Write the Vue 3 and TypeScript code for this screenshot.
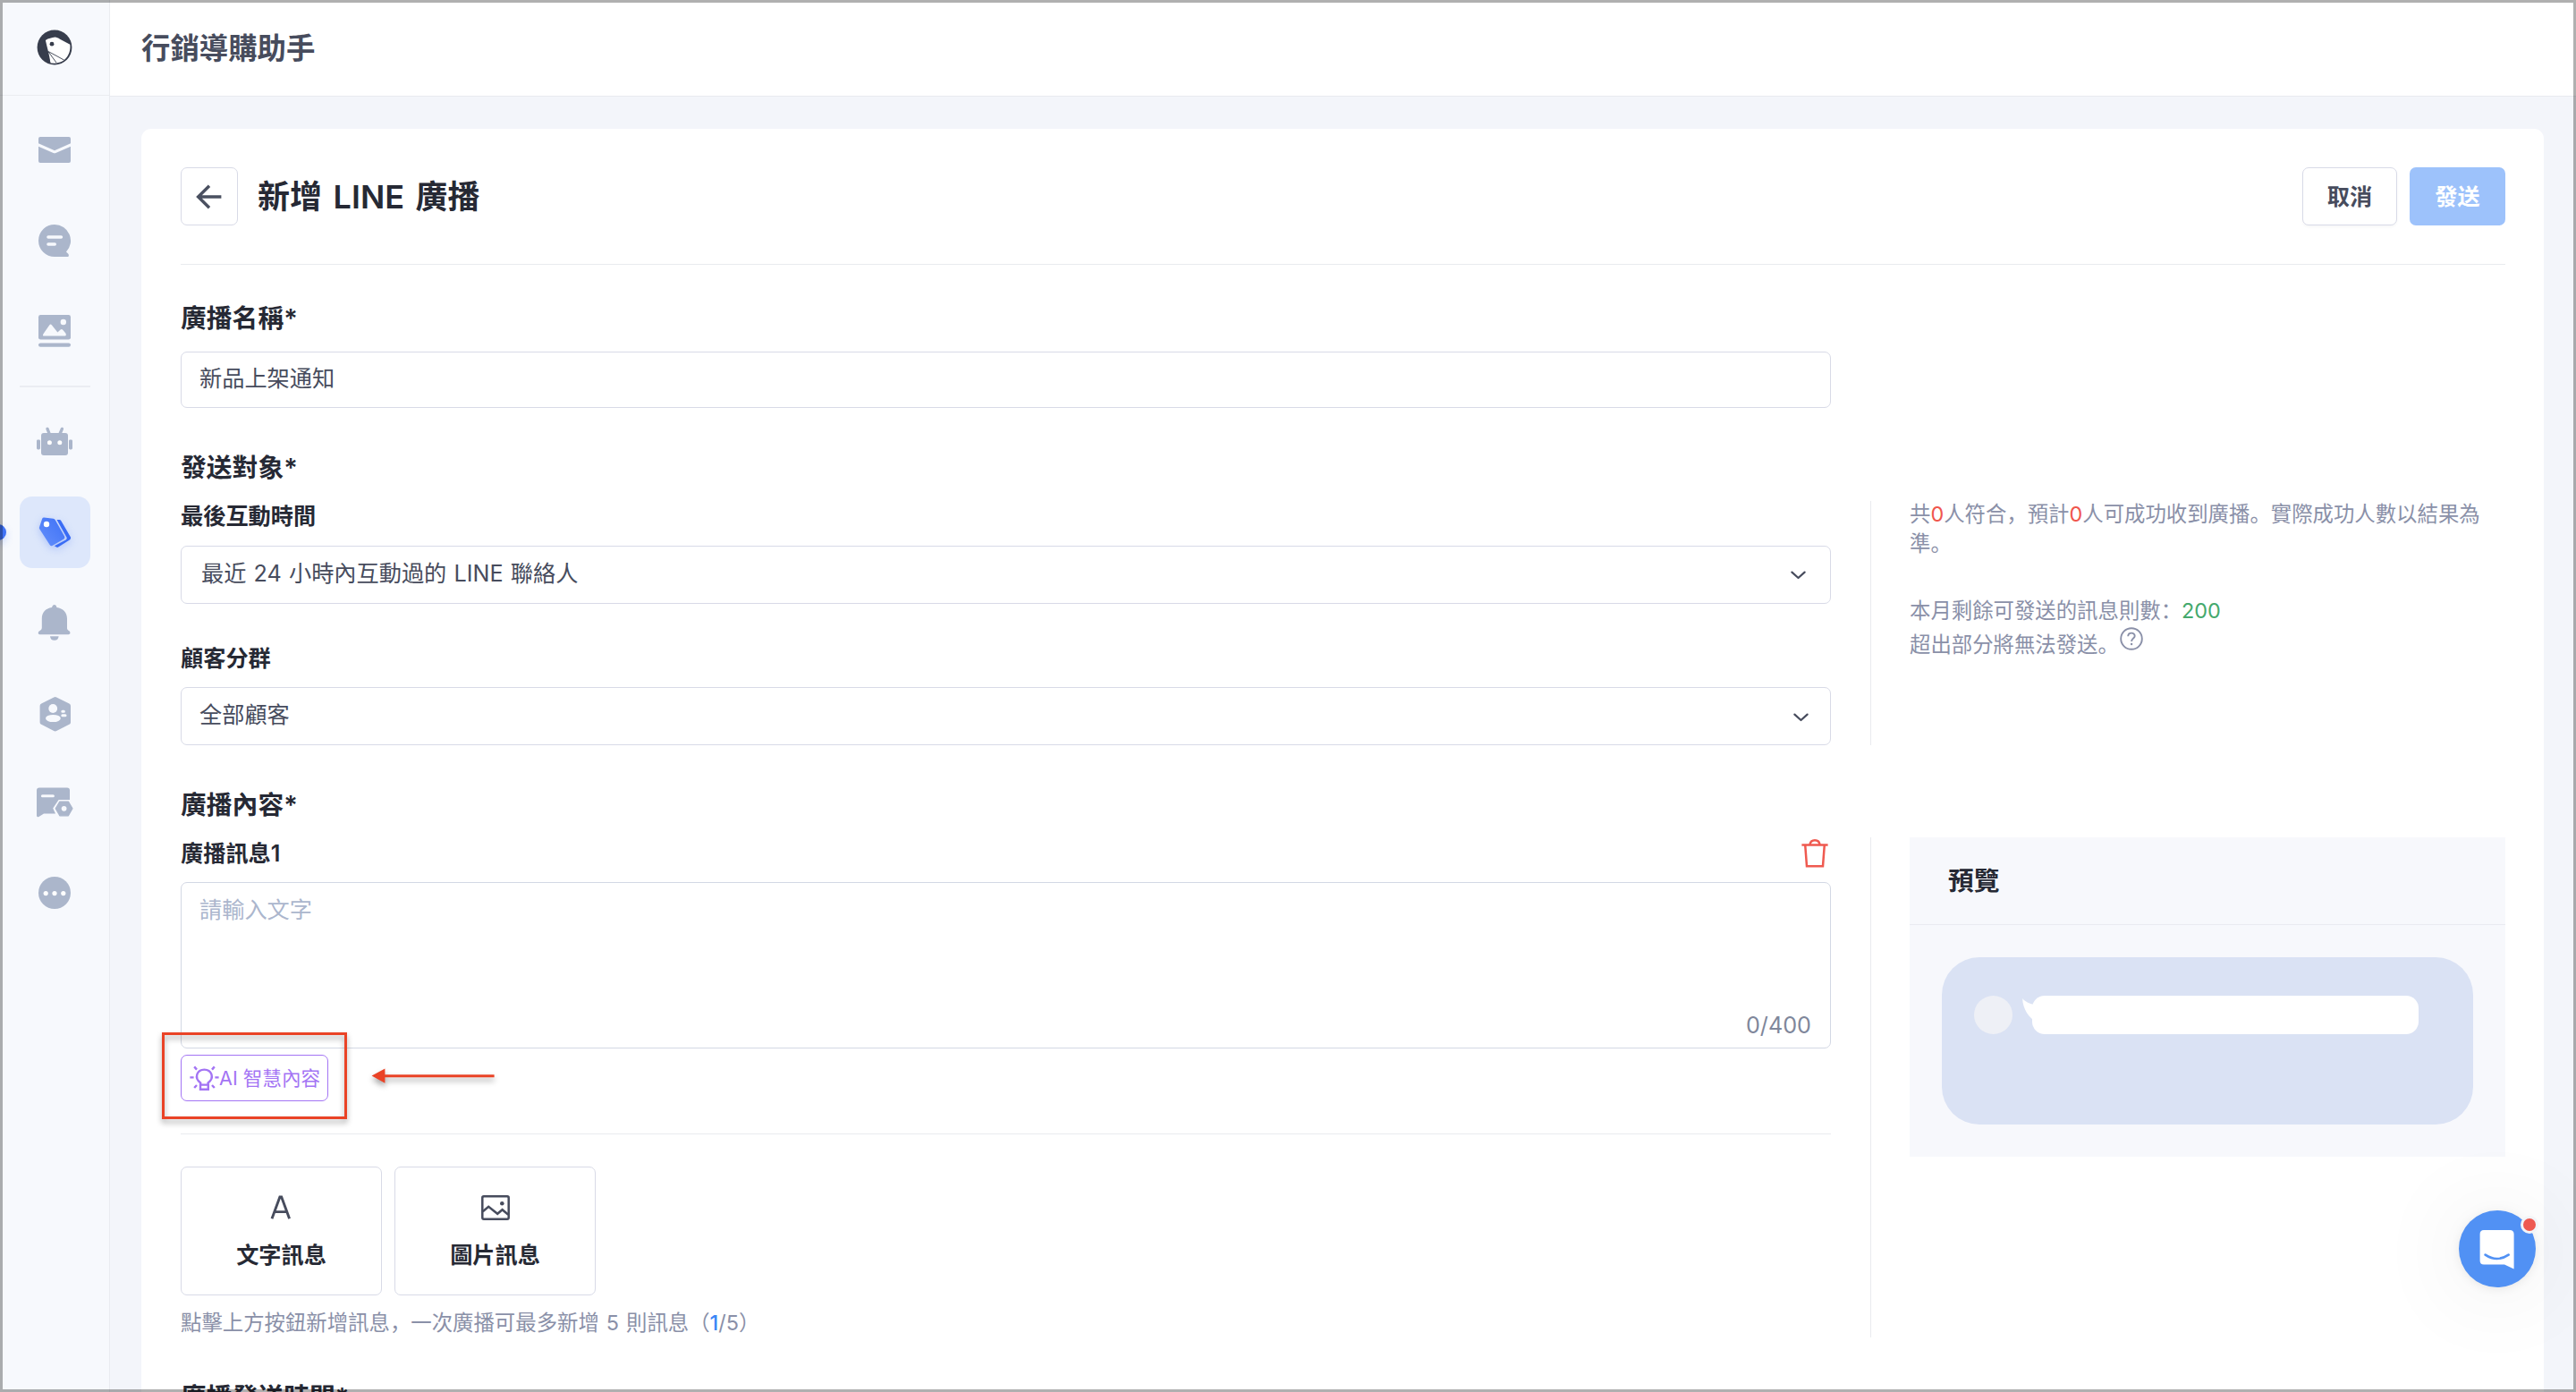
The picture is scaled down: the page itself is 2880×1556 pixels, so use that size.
<script setup lang="ts">
import { ref } from 'vue'

interface NavItem {
  id: string
  active?: boolean
}

const upperNav: NavItem[] = [{ id: 'mail' }, { id: 'chat' }, { id: 'gallery' }]
const lowerNav: NavItem[] = [
  { id: 'robot' },
  { id: 'tag', active: true },
  { id: 'bell' },
  { id: 'member' },
  { id: 'message' },
  { id: 'more' },
]

const broadcastName = ref('新品上架通知')
const lastActive = ref('最近 24 小時內互動過的 LINE 聯絡人')
const segment = ref('全部顧客')
const matched = ref(0)
const reachable = ref(0)
const quota = ref(200)
const messageCount = ref(1)
</script>

<template>
  <div class="page">
    <aside class="sidebar">
      <div class="brand">
        <svg width="40" height="40" viewBox="0 0 40 40">
          <circle cx="20" cy="20" r="19.4" fill="#373d4c" />
          <path d="M9.9 11.9C13 9.6 17 9.6 20.5 8.6C22.5 8.6 24 9.6 26 10.7L37.3 16.8C38.6 26.5 32.6 37.6 20 37.7L15.4 37.4C14.4 28 11.5 20 9.9 11.9Z" fill="#fff" />
          <circle cx="17" cy="16.2" r="2.4" fill="#373d4c" />
          <path d="M13.2 25L22 37M13 24.5L30.5 34" stroke="#373d4c" stroke-width="0.9" fill="none" />
          <path d="M11.5 24L15.6 37.8L13 37.5Z" fill="#373d4c" />
        </svg>
      </div>
      <nav class="nav">
        <div v-for="item in upperNav" :key="item.id" class="nav-item">
          <svg v-if="item.id === 'mail'" viewBox="0 0 80 80">
            <path d="M23 26H55A2 2 0 0 1 57 28V33.2L39 41.2L21 33.2V28A2 2 0 0 1 23 26Z" />
            <path d="M21 36.8L37.6 44Q39 44.5 40.4 44L57 36.8V53A2 2 0 0 1 55 55H23A2 2 0 0 1 21 53Z" />
          </svg>
          <svg v-else-if="item.id === 'chat'" viewBox="0 0 80 80">
            <path d="M39 23A18 18 0 0 1 52 53.5L54.5 56Q55.6 59 53.5 59H39A18 18 0 0 1 39 23Z" />
            <path d="M32 37H46.4M32 45H39.2" class="cut" />
          </svg>
          <svg v-else viewBox="0 0 80 80">
            <rect x="21" y="23" width="36" height="27.6" rx="2.4" />
            <path d="M33.2 34.4Q34.6 32.4 36 34.4L42.4 42.4L45.6 39.6Q47 38.4 48.2 39.8L51.4 43.6Q52.6 46.6 50.6 46.6H27.4Q25 46.6 26.6 44Z" fill="#f7f9fd" />
            <circle cx="48.8" cy="31" r="3.2" fill="#f7f9fd" />
            <rect x="21" y="54.4" width="36" height="4.4" rx="2.2" />
          </svg>
        </div>
        <div class="nav-divider"></div>
        <div v-for="item in lowerNav" :key="item.id" class="nav-item" :class="{ active: item.active }">
          <svg v-if="item.id === 'robot'" viewBox="0 0 80 80">
            <rect x="24" y="30" width="30" height="25" rx="3" />
            <rect x="19" y="37.4" width="4" height="11" rx="1.4" />
            <rect x="55" y="37.4" width="4" height="11" rx="1.4" />
            <path d="M31 25.4L33.2 31M47.4 25.4L45 31" stroke="#abb6cb" stroke-width="3.4" stroke-linecap="round" />
            <circle cx="33.4" cy="40.8" r="2.5" fill="#fff" />
            <circle cx="44.8" cy="40.8" r="2.5" fill="#fff" />
          </svg>
          <svg v-else-if="item.id === 'tag'" viewBox="0 0 80 80" class="tag-icon">
            <defs>
              <linearGradient id="tagFill" x1="0" y1="1" x2="1" y2="0">
                <stop offset="0" stop-color="#6590fb" />
                <stop offset="1" stop-color="#3d70f6" />
              </linearGradient>
            </defs>
            <path d="M41.5 26H44.6Q45.6 26.2 46.2 27L57 45.6Q57.4 47.2 56.2 48.2L43.2 56.6Q42 57.2 41 56.6L38.8 55.2L52 48.2Q53.2 47 52.4 45.4Z" fill="#3a6cf5" />
            <path d="M27.2 23.6L37.6 24.8Q39 25 39.8 26.2L50.2 44.8Q50.8 46.6 49.4 47.6L36.4 55Q34.8 55.6 33.8 54.2L22.2 36.2Q21.6 35.2 22 34.2L25.2 24.8Q25.8 23.5 27.2 23.6Z" fill="url(#tagFill)" />
            <circle cx="30" cy="31" r="3.2" fill="#fff" />
          </svg>
          <svg v-else-if="item.id === 'bell'" viewBox="0 0 80 80">
            <path d="M38.6 20Q41 20 41.4 23C48.4 24 53 28.6 53 35.6V46.6Q53 48 54.8 49L56 49.8Q57.4 53 54.6 53.2H22.6Q19.8 53 21.2 50L23 48.8Q24.8 47.8 24.8 46V35.6C24.8 28.6 29 24 36 23Q36.6 20 38.6 20Z" />
            <path d="M34 55.2H43.6Q43.2 59.8 38.8 59.8Q34.4 59.8 34 55.2Z" />
          </svg>
          <svg v-else-if="item.id === 'member'" viewBox="0 0 80 80">
            <path d="M38.2 22.4Q39.7 21.6 41.2 22.4L55.4 29.6Q57 30.4 57 32V50.4Q57 52 55.4 52.8L41.2 60Q39.7 60.8 38.2 60L24.2 52.8Q22.6 52 22.6 50.4V32Q22.6 30.4 24.2 29.6Z" />
            <ellipse cx="37.2" cy="35" rx="4.9" ry="5" fill="#f7f9fd" />
            <ellipse cx="37.4" cy="46" rx="8.4" ry="4.1" fill="#f7f9fd" />
            <path d="M47.8 38.2H49.4M47.8 42.8H51" class="cut thin" />
          </svg>
          <svg v-else-if="item.id === 'message'" viewBox="0 0 80 80">
            <path d="M22 22.4H53Q56 22.4 56 25.4V36H43.6L37.2 45.6L40 51.6H27L21.4 55Q19 56 19 53.6V25.4Q19 22.4 22 22.4Z" />
            <path d="M25.4 31.8H37.4" class="cut thin" />
            <path d="M44.8 38H54.4L59 45.8L54.4 53.8H44.8L40.2 45.8Z" stroke="#abb6cb" stroke-width="1.2" stroke-linejoin="round" />
            <circle cx="49.6" cy="45.8" r="2.9" fill="#f7f9fd" />
          </svg>
          <svg v-else viewBox="0 0 80 80">
            <circle cx="39" cy="39" r="18" />
            <circle cx="29.2" cy="39.6" r="2.6" fill="#fff" />
            <circle cx="39" cy="39.6" r="2.6" fill="#fff" />
            <circle cx="48.8" cy="39.6" r="2.6" fill="#fff" />
          </svg>
          <span v-if="item.active" class="active-dot"></span>
        </div>
      </nav>
    </aside>

    <div class="main">
      <header class="topbar">行銷導購助手</header>
      <div class="content">
        <div class="card">
          <div class="card-head">
            <button class="back" aria-label="返回">
              <svg width="30" height="28" viewBox="0 0 30 28">
                <path d="M28.4 14H2.6M15 1.8L2.6 14L15 26.2" fill="none" stroke="#4a5060" stroke-width="3.4" />
              </svg>
            </button>
            <h1>新增 LINE 廣播</h1>
            <div class="actions">
              <button class="btn">取消</button>
              <button class="btn primary">發送</button>
            </div>
          </div>

          <h2 class="first">廣播名稱*</h2>
          <div class="field name-field">{{ broadcastName }}</div>

          <h2>發送對象*</h2>
          <div class="row audience">
            <div class="left">
              <h3>最後互動時間</h3>
              <div class="field select one">
                <span>{{ lastActive }}</span>
                <svg width="17" height="10" viewBox="0 0 17 10"><path d="M1.4 1.6L8.5 8L15.6 1.6" fill="none" stroke="#474c5d" stroke-width="2.2" stroke-linecap="round" stroke-linejoin="round" /></svg>
              </div>
              <h3 class="second">顧客分群</h3>
              <div class="field select two">
                <span>{{ segment }}</span>
                <svg width="17" height="10" viewBox="0 0 17 10"><path d="M1.4 1.6L8.5 8L15.6 1.6" fill="none" stroke="#474c5d" stroke-width="2.2" stroke-linecap="round" stroke-linejoin="round" /></svg>
              </div>
            </div>
            <div class="right info">
              <p class="estimate">共<b class="red">{{ matched }}</b>人符合，預計<b class="red">{{ reachable }}</b>人可成功收到廣播。實際成功人數以結果為準。</p>
              <p class="quota">本月剩餘可發送的訊息則數：<b class="green">{{ quota }}</b></p>
              <p class="limit">
                <span>超出部分將無法發送。</span>
                <svg width="26" height="26" viewBox="0 0 26 26" fill="none" stroke="#8a90a8">
                  <circle cx="13" cy="13" r="11.8" stroke-width="1.9" />
                  <path d="M9.2 10.2C9.4 5.4 16.8 5.6 16.7 10C16.6 12.6 13.2 12.6 13.1 16" stroke-width="1.9" />
                  <circle cx="13.1" cy="19" r="1.2" fill="#8a90a8" stroke="none" />
                </svg>
              </p>
            </div>
          </div>

          <h2>廣播內容*</h2>
          <div class="row body-row">
            <div class="left">
              <div class="message-head">
                <h3>廣播訊息1</h3>
                <svg width="30" height="33" viewBox="0 0 30 33" fill="none" stroke="#ef5a50" stroke-width="2.5">
                  <path d="M0.4 7.4H29.6M4.2 7.4L6 31.2H24L25.8 7.4M9.4 7.4C10.4 0.4 19.6 0.4 20.6 7.4" />
                </svg>
              </div>
              <div class="editor">
                <span class="placeholder">請輸入文字</span>
                <span class="counter">0/400</span>
              </div>
              <button class="ai">
                <svg width="33" height="29" viewBox="0 0 33 29" fill="none" stroke="#a374f4" stroke-width="2.4">
                  <path d="M12.2 21.6V19.4C4.4 14 8.4 4.6 16.4 4.6S28.4 14 20.6 19.4V21.6" />
                  <path d="M12 21.6H20.8V26.8H12Z" />
                  <path d="M0.4 13.4H4.6M28.4 13.4H32.6M5.2 1.4L8 4.6M27.8 1.4L25 4.6M5.2 25L8 22M27.8 25L25 22" />
                </svg>
                <span>AI 智慧內容</span>
              </button>
              <div class="rule"></div>
              <div class="adders">
                <button class="adder">
                  <svg width="32" height="28" viewBox="0 0 32 28" fill="none" stroke="#474c5d" stroke-width="2.9">
                    <path d="M5 26.2L13.9 2H15.7L24.6 26.2M8.2 18.6H21.4" />
                  </svg>
                  <span>文字訊息</span>
                </button>
                <button class="adder">
                  <svg width="32" height="28" viewBox="0 0 32 28" fill="none" stroke="#474c5d" stroke-width="2.5">
                    <rect x="1.3" y="1.3" width="29.4" height="25.4" rx="1.6" />
                    <path d="M1.8 18.2L8.2 12.8L18.2 20.8L23.6 16.2L30.2 21.8" />
                    <ellipse cx="23.3" cy="9.2" rx="2.3" ry="2.2" fill="#474c5d" stroke="none" />
                  </svg>
                  <span>圖片訊息</span>
                </button>
              </div>
              <p class="hint">點擊上方按鈕新增訊息，一次廣播可最多新增 5 則訊息（<b class="blue">{{ messageCount }}</b>/5）</p>
            </div>
            <div class="right">
              <div class="preview">
                <div class="preview-title">預覽</div>
                <div class="preview-body">
                  <div class="screen">
                    <span class="avatar"></span>
                    <div class="bubble">
                      <svg class="tail" width="16" height="28" viewBox="0 0 16 28">
                        <path d="M0.2 0C3 4 8 5.4 13 7.2L16 16V27C8 22 0.2 12 0.2 0Z" fill="#fff" />
                      </svg>
                    </div>
                  </div>
                </div>
              </div>
            </div>
          </div>

          <h2 class="last">廣播發送時間*</h2>
        </div>
      </div>
    </div>

    <div class="callout-box"></div>
    <svg class="callout-arrow" width="140" height="24" viewBox="0 0 140 24">
      <path d="M0.6 8.6L15.4 0.6V7.2H137.6V10.2H15.4V16.8Z" fill="#ea4326" />
    </svg>

    <div class="launcher">
      <svg width="40" height="44" viewBox="0 0 40 44">
        <path d="M5 0H34Q38.6 0 38.6 4.6V43.4L28 38.6H5Q0.6 38.6 0.6 34V4.6Q0.6 0 5 0Z" fill="#fff" />
        <path d="M6.6 27.6Q19.6 36.4 32.6 27.6" fill="none" stroke="#5191f4" stroke-width="2.6" stroke-linecap="round" />
      </svg>
      <span class="badge"></span>
    </div>

    <div class="frame"></div>
  </div>
</template>

<style>
html,
body {
  margin: 0;
  background: #f2f4f9;
  overflow: hidden;
}
</style>

<style scoped>
.page {
  position: relative;
  display: flex;
  width: 2880px;
  height: 1556px;
  overflow: hidden;
  background: #f3f5fa;
  color: #262934;
  font-family: Inter, 'Noto Sans CJK SC', sans-serif;
  font-size: 25.2px;
}
.page * {
  box-sizing: border-box;
}
h1,
h2,
h3,
p {
  margin: 0;
}
b {
  font-weight: 400;
}
button {
  padding: 0;
  font: inherit;
  color: inherit;
  background: #fff;
  border: 1px solid #d8dae7;
  border-radius: 7px;
}

/* Sidebar */
.sidebar {
  flex: none;
  width: 123px;
  background: #f7f9fd;
  border-right: 1px solid #eaecf1;
}
.brand {
  display: flex;
  justify-content: center;
  align-items: center;
  height: 107px;
  border-bottom: 1px solid #eaecf1;
}
.nav {
  display: flex;
  flex-direction: column;
  align-items: center;
  gap: 21px;
  padding-top: 20px;
}
.nav-item {
  position: relative;
  flex: none;
  width: 79px;
  height: 80px;
  margin-left: 1px;
  border-radius: 14px;
}
.nav-item svg {
  display: block;
  width: 80px;
  height: 80px;
  fill: #abb6cb;
}
.nav-item .cut {
  fill: none;
  stroke: #f7f9fd;
  stroke-width: 3.6;
  stroke-linecap: round;
}
.nav-item .cut.thin {
  stroke-width: 3;
}
.nav-item.active {
  background: #dde7fb;
}
.nav-item .tag-icon {
  filter: drop-shadow(0 3px 4px rgba(70, 115, 246, 0.3));
}
.active-dot {
  position: absolute;
  left: -33px;
  top: 31px;
  width: 18px;
  height: 18px;
  border-radius: 50%;
  background: #3f72f6;
  box-shadow: 0 4px 8px rgba(63, 114, 246, 0.25);
}
.nav-divider {
  flex: none;
  width: 79px;
  height: 2px;
  margin: 1px 0 0 1px;
  background: #ebedf2;
}

/* Header and card */
.main {
  flex: 1;
  min-width: 0;
}
.topbar {
  height: 108px;
  padding-left: 35px;
  border-bottom: 1px solid #e8eaef;
  background: #fff;
  color: #474c5d;
  font-size: 32.4px;
  font-weight: 600;
  line-height: 109px;
}
.content {
  padding: 36px 36px 0 35px;
}
.card {
  height: 1500px;
  padding: 43px 43px 0 44px;
  border-radius: 11px;
  background: #fff;
}
.card-head {
  display: flex;
  height: 109px;
  border-bottom: 1px solid #e9ebef;
}
.back {
  display: flex;
  align-items: center;
  justify-content: center;
  width: 64px;
  height: 65px;
}
h1 {
  flex: 1;
  margin-left: 22px;
  font-size: 36px;
  font-weight: 600;
  line-height: 66px;
  word-spacing: 3.5px;
}
.actions {
  display: flex;
  gap: 14px;
}
.btn {
  width: 106px;
  height: 65px;
  padding-bottom: 3px;
  color: #474c5d;
  font-weight: 600;
  box-shadow: 0 2px 3px rgba(0, 0, 0, 0.03);
}
.btn.primary {
  width: 107px;
  border: none;
  background: #9dc2fb;
  color: #fff;
  box-shadow: none;
}

/* Form */
h2 {
  height: 40px;
  margin: 46px 0 18px;
  font-size: 28.8px;
  font-weight: 600;
  line-height: 41px;
}
h2.first {
  margin-top: 39px;
}
h3 {
  height: 34px;
  margin-bottom: 16px;
  font-size: 25.2px;
  font-weight: 600;
  line-height: 34px;
}
h3.second {
  margin: 44px 0 15px;
}
.field {
  width: 1845px;
  height: 65px;
  padding-left: 20px;
  border: 1px solid #d8dae7;
  border-radius: 7px;
  color: #474c5d;
  line-height: 61px;
}
.name-field {
  height: 63px;
  line-height: 59px;
}
.select {
  display: flex;
  justify-content: space-between;
  align-items: center;
}
.select span {
  margin-bottom: 3px;
  line-height: 40px;
  word-spacing: 1.1px;
}
.select.one {
  padding: 0 27px 0 22px;
}
.select.two {
  padding-right: 24px;
}
.select.two svg {
  margin-top: 3px;
}
.row {
  display: flex;
}
.left {
  width: 1889px;
  padding-right: 44px;
}
.right {
  flex: 1;
  padding-left: 43px;
  border-left: 1px solid #e9ebef;
}
.info {
  color: #8a90a8;
  font-size: 23.4px;
  line-height: 33px;
}
.info p {
  width: 650px;
}
.info .estimate {
  margin-top: -2px;
}
.red {
  color: #f0564d;
}
.green {
  color: #45a96d;
}
.blue {
  color: #3c86f6;
  font-weight: 500;
}
.info .quota {
  margin-top: 42px;
}
.info .limit {
  display: flex;
  gap: 1px;
  margin-top: 5px;
}
.limit svg {
  margin-top: -3px;
}
.body-row {
  margin-top: -1px;
}
.message-head {
  display: flex;
  justify-content: space-between;
  align-items: flex-start;
  height: 50px;
  padding: 1px 3px 0 0;
}
.message-head h3 {
  margin-bottom: 0;
}
.editor {
  display: flex;
  flex-direction: column;
  justify-content: space-between;
  height: 186px;
  padding: 12px 21px 7px 20px;
  border: 1px solid #d3d8e4;
  border-radius: 7px;
  line-height: 36px;
}
.placeholder {
  color: #abb6cd;
}
.counter {
  align-self: flex-end;
  color: #7f879b;
}
.ai {
  display: flex;
  align-items: center;
  width: 165px;
  height: 52px;
  margin-top: 7px;
  padding: 0 0 0 9px;
  border-color: #a374f4;
  color: #a374f4;
  font-size: 21.6px;
  white-space: nowrap;
}
.ai span {
  margin-bottom: 3px;
}
.rule {
  height: 1px;
  margin: 36px 0;
  background: #e9ebef;
}
.adders {
  display: flex;
  gap: 14px;
}
.adder {
  display: flex;
  flex-direction: column;
  align-items: center;
  width: 225px;
  height: 144px;
  padding-top: 31px;
  font-weight: 600;
}
.adder span {
  margin-top: 22px;
  line-height: 34px;
}
.hint {
  height: 32px;
  margin-top: 15px;
  color: #8a90a8;
  font-size: 23.4px;
  line-height: 32px;
  word-spacing: 1.4px;
}
h2.last {
  margin-top: 46px;
}

/* Preview */
.preview {
  height: 357px;
  background: #f7f8fc;
}
.preview-title {
  height: 98px;
  padding-left: 43px;
  border-bottom: 1px solid #e9ebf1;
  font-size: 28.8px;
  font-weight: 600;
  line-height: 97px;
}
.preview-body {
  padding: 36px;
}
.screen {
  display: flex;
  gap: 22px;
  height: 187px;
  padding: 43px 36px;
  border-radius: 42px;
  background: #dae2f4;
}
.avatar {
  width: 43px;
  height: 43px;
  border-radius: 50%;
  background: #eef0f6;
}
.bubble {
  position: relative;
  width: 432px;
  height: 43px;
  border-radius: 14px;
  background: #fff;
}
.tail {
  position: absolute;
  left: -11px;
  top: 3px;
}

/* Overlays */
.callout-box {
  position: absolute;
  left: 181px;
  top: 1154px;
  width: 207px;
  height: 97px;
  border: 3px solid #ea4326;
  filter: drop-shadow(0 4px 3px rgba(0, 0, 0, 0.35));
}
.callout-arrow {
  position: absolute;
  left: 415px;
  top: 1194px;
  overflow: visible;
  filter: drop-shadow(0 4px 3px rgba(0, 0, 0, 0.35));
}
.launcher {
  position: absolute;
  left: 2749px;
  top: 1353px;
  display: flex;
  justify-content: center;
  width: 86px;
  height: 86px;
  padding-top: 22px;
  border-radius: 50%;
  background: #5191f4;
  box-shadow: 0 2px 12px rgba(0, 0, 0, 0.08), 0 4px 110px rgba(0, 0, 0, 0.09);
}
.badge {
  position: absolute;
  left: 69px;
  top: 6px;
  width: 20px;
  height: 20px;
  border: 3px solid #f3f4f7;
  border-radius: 50%;
  background: #ee5951;
}
.frame {
  position: absolute;
  inset: 0;
  border: 3px solid rgba(0, 0, 0, 0.31);
  pointer-events: none;
}
</style>
